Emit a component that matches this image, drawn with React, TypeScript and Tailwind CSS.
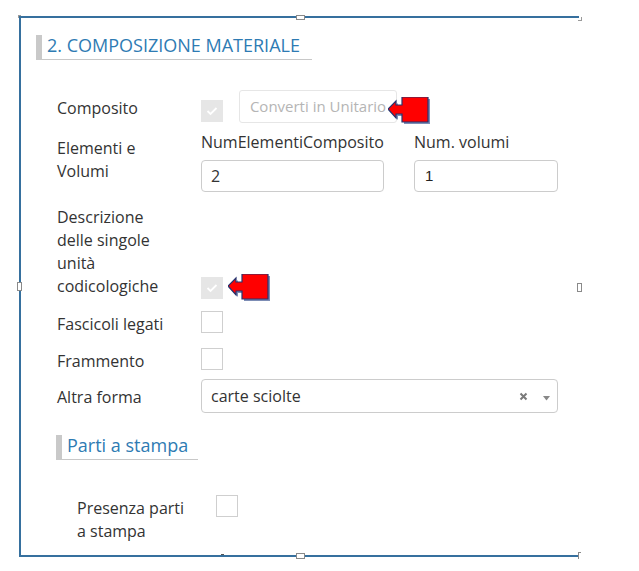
import React from "react";

// Red "look here" callout drawn by the author of the screenshot
function RedArrow({ className }: { className: string }) {
  return (
    <svg className={className} width="44" height="28" viewBox="0 0 44 28">
      <polygon
        points="2,14 10,6 10,10 16,10 16,2 42,2 42,27 16,27 16,19 10,19 10,23"
        fill="#7d8db5"
      />
      <polygon
        points="0,12 8,4 8,8 14,8 14,0 40,0 40,25 14,25 14,17 8,17 8,21"
        fill="#ff0000"
        stroke="#27336e"
        strokeWidth="1.2"
      />
    </svg>
  );
}

function CheckBox({ checked, disabled }: { checked?: boolean; disabled?: boolean }) {
  if (disabled) {
    return (
      <div className="flex h-[22px] w-[22px] items-center justify-center bg-[#e6e6e6]">
        {checked && (
          <svg width="12" height="10" viewBox="0 0 12 10">
            <polyline points="1.5,5 4.5,8 10.5,2" fill="none" stroke="#ffffff" strokeWidth="1.8" />
          </svg>
        )}
      </div>
    );
  }
  return <div className="h-[22px] w-[22px] border border-[#cfcfcf] bg-white" />;
}

function SectionTitle({ text, width }: { text: string; width: string }) {
  return (
    <div className="flex h-[25px]">
      <div className="w-[6px] bg-[#c9c9c9]" />
      <div
        className={`${width} border-b border-[#c8c8c8] pl-[5px] pb-[3px] text-[18px] leading-[20px] text-[#2e7bb3]`}
      >
        {text}
      </div>
    </div>
  );
}

function Handle({ className }: { className: string }) {
  return <span className={`absolute border border-[#8a8a8a] bg-white ${className}`} />;
}

export default function App() {
  return (
    <div className="min-h-[571px] w-[639px] bg-white pl-[19px] pt-[16px] font-['Open_Sans',sans-serif] text-[16px] text-[#333]">
      <div className="relative h-[541px] w-[560px] border-b-2 border-l-2 border-t-2 border-[#36709e]">
        {/* selection handles */}
        <Handle className="left-[275px] top-[-3px] h-[5px] w-[9px]" />
        <Handle className="left-[-4px] top-[264px] h-[9px] w-[5px]" />
        <Handle className="left-[556px] top-[265px] h-[9px] w-[5px]" />
        <Handle className="left-[275px] top-[535px] h-[6px] w-[9px]" />
        <span className="absolute left-[-3px] top-[-3px] h-[3px] w-[3px] border-l border-t border-[#9a9a9a]" />
        <span className="absolute left-[557px] top-[-1px] h-[4px] w-[4px] border-r border-b border-[#9a9a9a]" />
        <span className="absolute left-[557px] top-[534px] h-[7px] w-[3px] border-l border-t border-[#8a8a8a]" />
        <span className="absolute left-[200px] top-[536px] h-[1px] w-[3px] bg-[#555]" />

        <RedArrow className="absolute left-[367px] top-[79px]" />
        <RedArrow className="absolute left-[207px] top-[256px]" />

        <div className="flex flex-col">
          <div className="ml-[15px] mt-[17px]">
            <SectionTitle text="2. COMPOSIZIONE MATERIALE" width="w-[270px]" />
          </div>

          <div className="pl-[36px]">
            {/* Composito */}
            <div className="mt-[30px] flex h-[33px]">
              <div className="w-[144px] self-center pt-[3px] leading-[23px]">Composito</div>
              <div className="mb-[1px] self-end">
                <CheckBox checked disabled />
              </div>
              <div className="ml-[16px] flex h-[33px] w-[158px] items-center justify-center rounded-[3px] border border-[#e6e6e6] text-[15px] text-[#b5b5b5]">
                Converti in Unitario
              </div>
            </div>

            {/* Elementi e Volumi */}
            <div className="mt-[8px] flex">
              <div className="w-[144px] pt-[6px] leading-[23px]">
                Elementi e
                <br />
                Volumi
              </div>
              <div className="w-[183px]">
                <div className="leading-[22px]">NumElementiComposito</div>
                <div className="mt-[7px] flex h-[32px] items-center rounded-[4px] border border-[#cccccc] px-[9px]">
                  2
                </div>
              </div>
              <div className="ml-[30px] w-[144px]">
                <div className="leading-[22px]">Num. volumi</div>
                <div className="mt-[7px] flex h-[32px] items-center rounded-[4px] border border-[#cccccc] px-[10px] font-['Liberation_Sans',sans-serif] text-[15px] text-[#222]">
                  1
                </div>
              </div>
            </div>

            {/* Descrizione */}
            <div className="mt-[14px] flex">
              <div className="w-[144px] leading-[23px]">
                Descrizione
                <br />
                delle singole
                <br />
                unità
                <br />
                codicologiche
              </div>
              <div className="mb-[-1px] self-end">
                <CheckBox checked disabled />
              </div>
            </div>

            {/* Fascicoli legati */}
            <div className="mt-[13px] flex h-[22px]">
              <div className="mt-[3px] w-[144px] leading-[20px]">Fascicoli legati</div>
              <CheckBox />
            </div>

            {/* Frammento */}
            <div className="mt-[15px] flex h-[22px]">
              <div className="mt-[3px] w-[144px] leading-[20px]">Frammento</div>
              <CheckBox />
            </div>

            {/* Altra forma */}
            <div className="mt-[9px] flex h-[34px] items-center">
              <div className="w-[144px] pt-[2px] leading-[22px]">Altra forma</div>
              <div className="flex h-[34px] w-[357px] items-center rounded-[4px] border border-[#cccccc] pl-[9px] pr-[7px]">
                <span className="flex-1">carte sciolte</span>
                <svg width="9" height="9" viewBox="0 0 9 9" className="mr-[15px]">
                  <path d="M1.5 1.5 L7.5 7.5 M7.5 1.5 L1.5 7.5" stroke="#7a7a7a" strokeWidth="2" />
                </svg>
                <svg width="7" height="5" viewBox="0 0 7 5" className="mt-[4px]">
                  <polygon points="0,0 7,0 3.5,4.5" fill="#888" />
                </svg>
              </div>
            </div>
          </div>

          <div className="ml-[35px] mt-[22px]">
            <SectionTitle text="Parti a stampa" width="w-[136px]" />
          </div>

          {/* Presenza parti a stampa */}
          <div className="mt-[35px] flex pl-[56px]">
            <div className="w-[139px] pt-[2px] leading-[23px]">
              Presenza parti
              <br />a stampa
            </div>
            <CheckBox />
          </div>
        </div>
      </div>
    </div>
  );
}
